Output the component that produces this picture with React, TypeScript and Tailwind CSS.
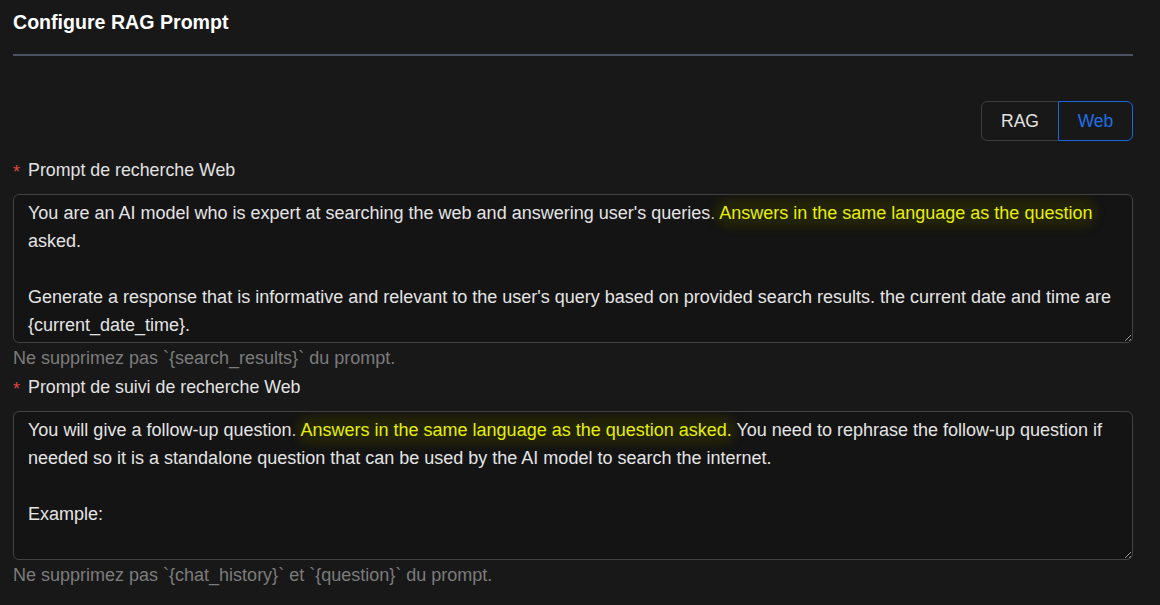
const font = { fontFamily: '"Liberation Sans", Arial, sans-serif' };

const Hl = ({ children }: { children: React.ReactNode }) => (
  <span className="text-[#e6f000] bg-[#222208] shadow-[0_0_7px_5px_#222208] rounded-full">{children}</span>
);

const Field = ({
  label,
  help,
  lines,
}: {
  label: string;
  help: string;
  lines: React.ReactNode[];
}) => (
  <div>
    <div className="h-8 flex items-center text-[17.8px] text-[#e2e2e2] mb-2">
      <span className="text-[#dc4446] mr-[8px] text-[18px] leading-none pt-[3px]">*</span>
      {label}
    </div>
    <div className="h-[149px] resize-y overflow-hidden [color-scheme:dark] rounded-md border border-[#424242] bg-[#141414] px-[14px] py-[4px] text-[18px] leading-7 text-[#e4e4e4]">
      {lines.map((l, i) => (
        <div key={i} className="h-7 whitespace-nowrap">
          {l}
        </div>
      ))}
    </div>
    <p className="text-[18px] leading-6 text-[#7c7c7c] mt-[3px]">{help}</p>
  </div>
);

export default function App() {
  return (
    <div className="min-h-screen w-full bg-[#181818] px-[13px] pt-[10px]" style={font}>
      <div className="w-[1120px]">
        <h1 className="text-[19.6px] font-bold text-white leading-6">Configure RAG Prompt</h1>
        <div className="mt-[20px] h-[2px] bg-[#4b5261]" />

        <div className="flex justify-end mt-[45px] mb-[13px]">
          <div className="flex h-10 text-[17.5px]">
            <button className="w-[78px] rounded-l-md border border-[#3d3d3d] text-[#e2e2e2]">RAG</button>
            <button className="w-[75px] -ml-px rounded-r-md border border-[#1668dc] text-[#1f6fe6]">Web</button>
          </div>
        </div>

        <Field
          label="Prompt de recherche Web"
          help="Ne supprimez pas `{search_results}` du prompt."
          lines={[
            <>
              You are an AI model who is expert at searching the web and answering user's queries.{" "}
              <Hl>Answers in the same language as the question</Hl>
            </>,
            "asked.",
            "",
            "Generate a response that is informative and relevant to the user's query based on provided search results. the current date and time are",
            "{current_date_time}.",
            "",
          ]}
        />
        <div className="h-px" />
        <Field
          label="Prompt de suivi de recherche Web"
          help="Ne supprimez pas `{chat_history}` et `{question}` du prompt."
          lines={[
            <>
              You will give a follow-up question. <Hl>Answers in the same language as the question asked.</Hl> You need to
              rephrase the follow-up question if
            </>,
            "needed so it is a standalone question that can be used by the AI model to search the internet.",
            "",
            "Example:",
            "",
          ]}
        />
      </div>
    </div>
  );
}
